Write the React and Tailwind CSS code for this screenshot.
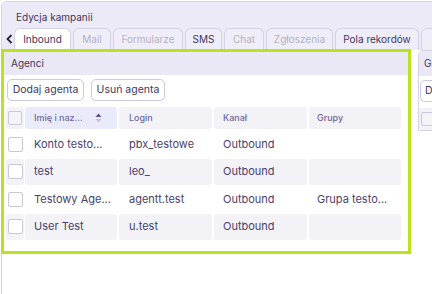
import React from "react";

const tabs = [
  { label: "Inbound", w: 57, active: true },
  { label: "Mail", w: 38, disabled: true },
  { label: "Formularze", w: 70, disabled: true },
  { label: "SMS", w: 37 },
  { label: "Chat", w: 40, disabled: true },
  { label: "Zgłoszenia", w: 67, disabled: true },
  { label: "Pola rekordów", w: 84 },
  { label: "Xyz", w: 40 },
];

const rows = [
  { name: "Konto testo...", login: "pbx_testowe", kanal: "Outbound", grupy: "" },
  { name: "test", login: "leo_", kanal: "Outbound", grupy: "" },
  { name: "Testowy Age...", login: "agentt.test", kanal: "Outbound", grupy: "Grupa testo..." },
  { name: "User Test", login: "u.test", kanal: "Outbound", grupy: "" },
];

function Checkbox() {
  return <div className="w-[15px] h-[15px] rounded-[2px] border border-[#c9c8de] bg-white" />;
}

function SortIcon() {
  return (
    <svg width="7" height="10" viewBox="0 0 7 10" className="ml-auto mr-[15px]">
      <path d="M3.5 0.5 L6.5 4 L0.5 4 Z" fill="#5d5380" />
      <path d="M3.5 9.5 L6.5 6 L0.5 6 Z" fill="#c5c3d6" />
    </svg>
  );
}

export default function App() {
  return (
    <div
      className="w-[432px] h-[294px] overflow-hidden bg-white relative"
      style={{ fontFamily: "Inter, 'Liberation Sans', sans-serif" }}
    >
      <div className="ml-px mt-px w-[460px] h-[320px] border border-[#d3d2e6] rounded-tl-[6px] bg-white">
        {/* header */}
        <div className="bg-[#ebeaf6] rounded-tl-[6px]">
          <div className="h-[26px] pl-[14px] pt-[9px] text-[10px] leading-[12px] text-[#3f3560]">
            Edycja kampanii
          </div>
          <div className="flex items-end h-[22px]">
            <div className="w-[13px] h-[22px] flex items-center justify-center">
              <svg width="7" height="10" viewBox="0 0 7 10" className="ml-[4px]">
                <path d="M5.5 1 L1.5 5 L5.5 9" stroke="#2a2340" strokeWidth="1.8" fill="none" />
              </svg>
            </div>
            <div className="flex gap-[2px] ml-px">
              {tabs.map((t) => (
                <div
                  key={t.label}
                  style={{ width: t.w }}
                  className={
                    "h-[22px] shrink-0 rounded-t-[6px] border border-b-0 border-[#d3d2e6] flex items-center justify-center text-[10px] " +
                    (t.active
                      ? "bg-white text-[#3f3560]"
                      : t.disabled
                      ? "bg-[#efeef8] text-[#b3b2c2]"
                      : "bg-[#efeef8] text-[#3f3560]")
                  }
                >
                  {t.label}
                </div>
              ))}
            </div>
          </div>
        </div>

        {/* body */}
        <div className="flex items-start">
          <div className="-ml-px mt-[-1px] w-[410px] h-[205px] shrink-0 border-[3px] border-[#b8e41f] bg-white flex flex-col">
            <div className="h-[23px] bg-[#e9e8f4] pl-[7px] flex items-center text-[10px] text-[#3f3560]">
              Agenci
            </div>
            <div className="flex gap-[7px] pl-[3px] mt-[4px]">
              <div className="h-[22px] w-[77px] rounded-[5px] border border-[#cbcae0] bg-white flex items-center justify-center text-[10.5px] text-[#3f3560]">
                Dodaj agenta
              </div>
              <div className="h-[22px] w-[74px] rounded-[5px] border border-[#cbcae0] bg-white flex items-center justify-center text-[10.5px] text-[#3f3560]">
                Usuń agenta
              </div>
            </div>
            <div className="pl-[2px] mt-[6px] flex flex-col gap-[1.5px]">
              {/* header row */}
              <div className="flex h-[22px] text-[9px] font-medium text-[#73699a]">
                <div className="w-[18px] rounded-[3px] bg-[#f2f2f7] flex items-center justify-center">
                  <div className="w-[14px] h-[14px] rounded-[2px] border border-[#c9c8de] bg-[#f4f4f8]" />
                </div>
                <div className="ml-px w-[92px] rounded-[3px] bg-[#e9eafa] flex items-center pl-[9px]">
                  Imię i naz...
                  <SortIcon />
                </div>
                <div className="ml-[2px] w-[93px] rounded-[3px] bg-[#f2f2f7] flex items-center pl-[10px]">Login</div>
                <div className="ml-[2px] w-[93px] rounded-[3px] bg-[#f2f2f7] flex items-center pl-[9px]">Kanał</div>
                <div className="ml-[2px] w-[92px] rounded-[3px] bg-[#f2f2f7] flex items-center pl-[8px]">Grupy</div>
              </div>
              {rows.map((r, i) => {
                const bg = i % 2 === 1 ? "bg-[#f2f2f7]" : "bg-white";
                return (
                  <div key={i} className={"flex h-[26px] text-[11px] text-[#4a3f6d] " + (i === 0 ? "mt-[0.5px]" : "")}>
                    <div className={"w-[18px] rounded-[3px] flex items-center justify-center " + bg}>
                      <Checkbox />
                    </div>
                    <div className={"ml-px w-[92px] rounded-[3px] flex items-center pl-[9px] " + bg}>{r.name}</div>
                    <div className={"ml-[2px] w-[93px] rounded-[3px] flex items-center pl-[10px] " + bg}>{r.login}</div>
                    <div className={"ml-[2px] w-[93px] rounded-[3px] flex items-center pl-[9px] " + bg}>{r.kanal}</div>
                    <div className={"ml-[2px] w-[92px] rounded-[3px] flex items-center pl-[8px] " + bg}>{r.grupy}</div>
                  </div>
                );
              })}
            </div>
          </div>

          {/* right panel */}
          <div className="ml-[7px] w-[200px] shrink-0 border border-[#d3d2e6] rounded-tl-[5px] bg-white">
            <div className="h-[25px] bg-[#e9e8f4] pl-[5px] flex items-center text-[10px] text-[#3f3560]">
              Grupy
            </div>
            <div className="pl-[1px] mt-[4px]">
              <div className="h-[22px] w-[77px] rounded-[5px] border border-[#cbcae0] bg-white flex items-center pl-[4px] text-[10.5px] text-[#3f3560]">
                Dodaj grupę
              </div>
            </div>
            <div className="flex mt-[6px] h-[22px]">
              <div className="w-[18px] rounded-[3px] bg-[#f2f2f7] flex items-center justify-center">
                <div className="w-[14px] h-[14px] rounded-[2px] border border-[#c9c8de] bg-[#f4f4f8]" />
              </div>
            </div>
          </div>
        </div>
      </div>
    </div>
  );
}
